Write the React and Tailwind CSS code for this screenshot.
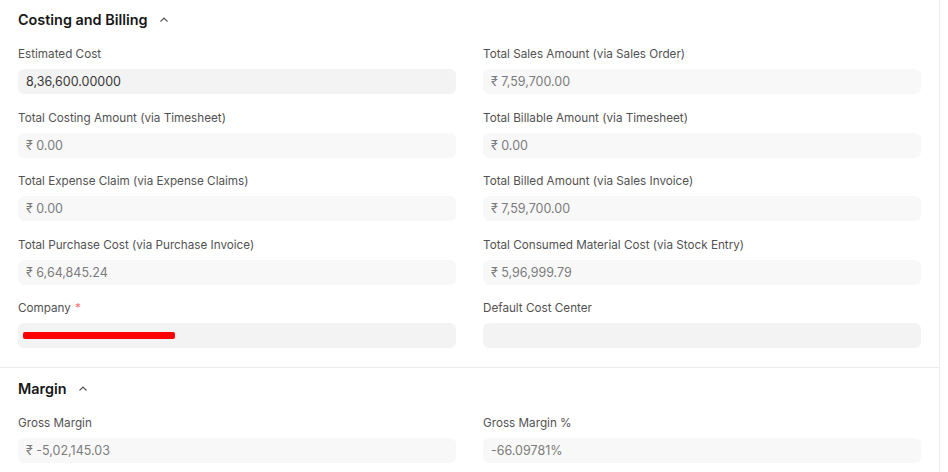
const billing = [
  ["Estimated Cost", "8,36,600.00000", true],
  ["Total Sales Amount (via Sales Order)", "₹ 7,59,700.00"],
  ["Total Costing Amount (via Timesheet)", "₹ 0.00"],
  ["Total Billable Amount (via Timesheet)", "₹ 0.00"],
  ["Total Expense Claim (via Expense Claims)", "₹ 0.00"],
  ["Total Billed Amount (via Sales Invoice)", "₹ 7,59,700.00"],
  ["Total Purchase Cost (via Purchase Invoice)", "₹ 6,64,845.24"],
  ["Total Consumed Material Cost (via Stock Entry)", "₹ 5,96,999.79"],
];

const Chevron = () => (
  <svg width="10" height="10" viewBox="0 0 10 10" className="text-[#525252]">
    <path d="M1.5 6.5 L5 3 L8.5 6.5" fill="none" stroke="currentColor" strokeWidth="1.1" />
  </svg>
);

const Field = ({ label, value, editable, required, children }) => (
  <div>
    <div className="mt-[2px] h-4 flex items-center text-[11.7px] text-[#525252]">
      {label}
      {required && <span className="ml-1 text-[#f87171]">*</span>}
    </div>
    <div
      className={`mt-[6px] h-[25px] rounded-md px-2 pt-[2px] flex items-center text-[12.5px] ${
        editable ? "bg-[#f3f3f3] text-[#383838]" : "bg-[#f8f8f8] text-[#7c7c7c]"
      }`}
    >
      {children || value}
    </div>
  </div>
);

const SectionHead = ({ title }) => (
  <div className="h-[18px] flex items-center gap-[11px]">
    <h2 className="text-[14.4px] font-semibold text-[#171717]">{title}</h2>
    <Chevron />
  </div>
);

export default function App() {
  return (
    <div className="w-[948px] h-[472px] bg-white overflow-hidden" style={{ fontFamily: "Inter, 'Noto Sans', sans-serif" }}>
      <div className="w-[940px] border-r border-[#ececec] h-full">
        {/* COSTING AND BILLING */}
        <div className="px-[18px] pt-[11px] pb-[19px] border-b border-[#ececec]">
          <SectionHead title="Costing and Billing" />
          <div className="mt-4 grid grid-cols-2 gap-x-[27px] gap-y-[14.5px]">
            {billing.map(([label, value, editable]) => (
              <Field key={label} label={label} value={value} editable={editable} />
            ))}
            <Field label="Company" required editable>
              <div className="ml-[-3px] mt-[-3px] h-[7px] w-[152px] bg-[#ff0000] rounded-[2px]" />
            </Field>
            <Field label="Default Cost Center" editable value="" />
          </div>
        </div>

        {/* MARGIN */}
        <div className="px-[18px] pt-[12px]">
          <SectionHead title="Margin" />
          <div className="mt-4 grid grid-cols-2 gap-x-[27px]">
            <Field label="Gross Margin" value="₹ -5,02,145.03" />
            <Field label="Gross Margin %" value="-66.09781%" />
          </div>
        </div>
      </div>
    </div>
  );
}
